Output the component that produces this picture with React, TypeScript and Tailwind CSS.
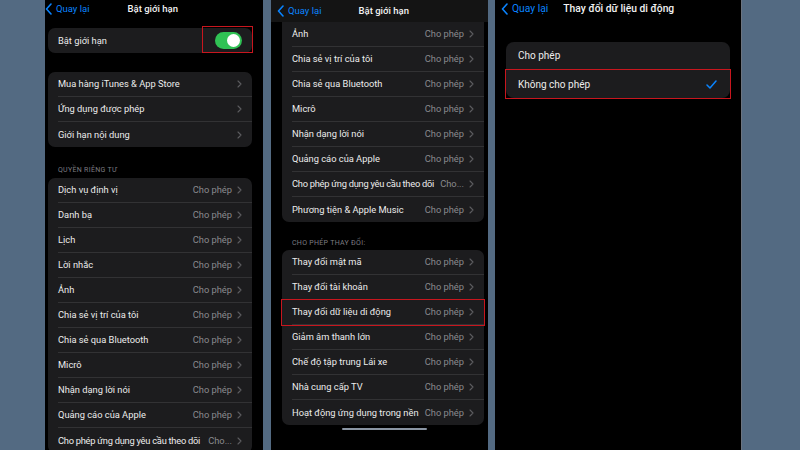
import type { ReactNode } from "react";

const FONT = { fontFamily: "Roboto, 'Noto Sans', sans-serif" };

function Chevron() {
  return (
    <svg width="5" height="8" viewBox="0 0 5 8" className="shrink-0">
      <polyline points="1,1 4,4 1,7" fill="none" stroke="#5c5c60" strokeWidth="1.1" strokeLinecap="round" strokeLinejoin="round" />
    </svg>
  );
}

function BackChevron() {
  return (
    <svg width="7" height="12" viewBox="0 0 7 12" className="shrink-0">
      <polyline points="6,1 1.5,6 6,11" fill="none" stroke="#0a84ff" strokeWidth="1.6" strokeLinecap="round" strokeLinejoin="round" />
    </svg>
  );
}

function Nav({ title, gap, className }: { title: string; gap: string; className: string }) {
  return (
    <div className={`flex items-center ${className}`}>
      <BackChevron />
      <span className="ml-[4px] text-[#0a84ff]">Quay lại</span>
      <span className={`${gap} font-medium text-[#f2f2f2]`}>{title}</span>
    </div>
  );
}

function Row({
  label,
  value,
  last,
  tight,
  children,
  className = "",
}: {
  label: string;
  value?: string;
  last?: boolean;
  tight?: boolean;
  children?: ReactNode;
  className?: string;
}) {
  return (
    <div className={`relative flex h-[25px] pl-[10px] ${className}`}>
      <div className={`flex min-w-0 flex-1 items-center pr-[10px] ${last ? "" : "border-b border-[#323234]"}`}>
        <span className={`flex-1 whitespace-nowrap text-[#ececec] ${tight ? "tracking-[-0.25px]" : ""}`}>{label}</span>
        {value !== undefined && <span className="ml-[3px] shrink-0 text-[#8a8a8e]">{value}</span>}
        {value !== undefined && <span className="ml-[5px] shrink-0"><Chevron /></span>}
        {children}
      </div>
    </div>
  );
}

function Header({ children, className }: { children: ReactNode; className: string }) {
  return <div className={`text-[7px] tracking-[0.3px] text-[#7d7d82] ${className}`}>{children}</div>;
}

const privacy = [
  "Dịch vụ định vị",
  "Danh bạ",
  "Lịch",
  "Lời nhắc",
  "Ảnh",
  "Chia sẻ vị trí của tôi",
  "Chia sẻ qua Bluetooth",
  "Micrô",
  "Nhận dạng lời nói",
  "Quảng cáo của Apple",
];

function PanelOne() {
  return (
    <div className="h-[450px] w-[218px] shrink-0 overflow-hidden bg-black text-[9.3px]">
      <Nav title="Bật giới hạn" gap="ml-[38px]" className="h-[17px] pt-[1px] text-[9.5px]" />
      <div className="mt-[11px] ml-[3px] mr-[11px] flex flex-col">
        <div className="rounded-[7px] bg-[#1c1c1e]">
          <Row label="Bật giới hạn" last>
            <div className="relative flex h-[17px] w-[27px] items-center justify-end rounded-full bg-[#30c254] pr-[2px]">
              <div className="h-[13px] w-[13px] rounded-full bg-white" />
              <div className="absolute -left-[12px] -top-[5px] h-[25px] w-[49px] outline-[1.5px] outline-solid outline-[#c8161e]" />
            </div>
          </Row>
        </div>
        <div className="mt-[19px] rounded-[7px] bg-[#1c1c1e]">
          <Row label="Mua hàng iTunes & App Store" value="" />
          <Row label="Ứng dụng được phép" value="" />
          <Row label="Giới hạn nội dung" value="" last />
        </div>
        <Header className="ml-[10px] mt-[19px] mb-[4px] h-[8px] leading-[8px]">QUYỀN RIÊNG TƯ</Header>
        <div className="rounded-[7px] bg-[#1c1c1e]">
          {privacy.map((p) => (
            <Row key={p} label={p} value="Cho phép" />
          ))}
          <Row label="Cho phép ứng dụng yêu cầu theo dõi" value="Cho..." tight last />
        </div>
      </div>
    </div>
  );
}

const listTop = [
  "Ảnh",
  "Chia sẻ vị trí của tôi",
  "Chia sẻ qua Bluetooth",
  "Micrô",
  "Nhận dạng lời nói",
  "Quảng cáo của Apple",
];

const changes = [
  "Thay đổi mật mã",
  "Thay đổi tài khoản",
  "Thay đổi dữ liệu di động",
  "Giảm âm thanh lớn",
  "Chế độ tập trung Lái xe",
  "Nhà cung cấp TV",
  "Hoạt động ứng dụng trong nền",
];

function PanelTwo() {
  return (
    <div className="h-[450px] w-[217px] shrink-0 overflow-hidden bg-black text-[9.3px]">
      <Nav title="Bật giới hạn" gap="ml-[37px]" className="h-[22px] bg-[#141414] pl-[6px] pb-[4px] pt-[4px] text-[9.5px]" />
      <div className="ml-[11px] mr-[4px] flex flex-col">
        <div className="rounded-b-[7px] bg-[#1c1c1e]">
          {listTop.map((p) => (
            <Row key={p} label={p} value="Cho phép" />
          ))}
          <Row label="Cho phép ứng dụng yêu cầu theo dõi" value="Cho..." tight />
          <Row label="Phương tiện & Apple Music" value="Cho phép" last />
        </div>
        <Header className="ml-[10px] mt-[17px] mb-[3px] h-[8px] leading-[8px]">CHO PHÉP THAY ĐỔI:</Header>
        <div className="rounded-[7px] bg-[#1c1c1e]">
          {changes.map((p, i) => (
            <Row
              key={p}
              label={p}
              value="Cho phép"
              last={i === changes.length - 1}
              className={i === 2 ? "outline-[1.5px] outline-solid outline-[#c8161e]" : ""}
            />
          ))}
        </div>
        <div className="mt-[3px] ml-[60px] h-[2px] w-[85px] rounded-full bg-[#8a95a3]" />
      </div>
    </div>
  );
}

function PanelThree() {
  return (
    <div className="h-[450px] w-[247px] shrink-0 overflow-hidden border-r border-[#6c7480] bg-black">
      <Nav title="Thay đổi dữ liệu di động" gap="ml-[15px]" className="h-[18px] pl-[6px] text-[10.3px]" />
      <div className="mt-[24px] ml-[11px] mr-[11px] rounded-[8px] bg-[#1c1c1e] text-[10px] text-[#ececec]">
        <div className="flex h-[28px] items-center pl-[12px]">
          <div className="flex h-full flex-1 items-center border-b border-[#323234]">Cho phép</div>
        </div>
        <div className="flex h-[28px] items-center justify-between pl-[12px] pr-[13px] outline-[1.5px] outline-solid outline-[#c8161e]">
          <span>Không cho phép</span>
          <svg width="11" height="9" viewBox="0 0 11 9">
            <polyline points="1,5 4,8 10,1" fill="none" stroke="#0a84ff" strokeWidth="1.5" strokeLinecap="round" strokeLinejoin="round" />
          </svg>
        </div>
      </div>
    </div>
  );
}

export default function App() {
  return (
    <div className="flex h-[450px] w-[800px] overflow-hidden bg-[#536a82] pl-[45px]" style={FONT}>
      <PanelOne />
      <div className="w-[8px] shrink-0" />
      <PanelTwo />
      <div className="w-[7px] shrink-0" />
      <PanelThree />
    </div>
  );
}
